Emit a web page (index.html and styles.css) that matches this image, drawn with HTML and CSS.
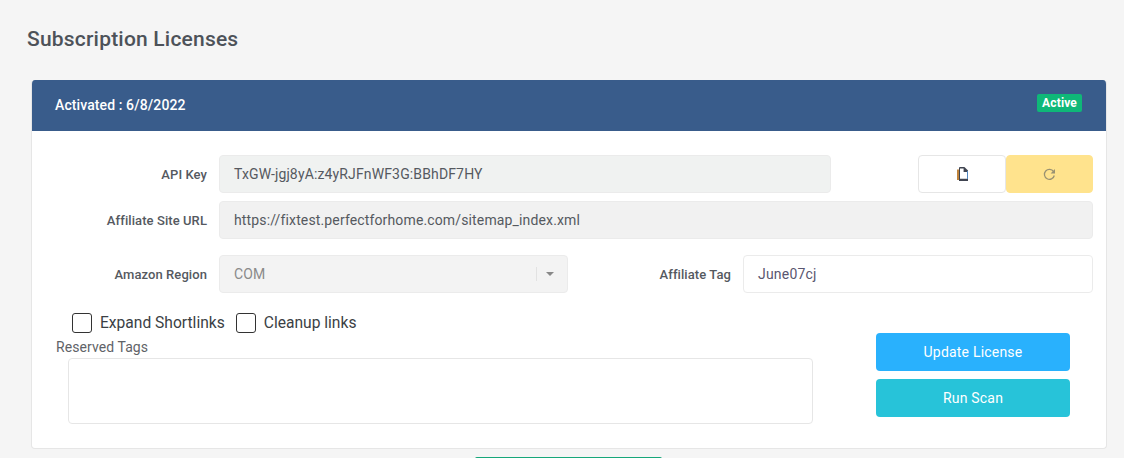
FILE: index.html
```html
<!DOCTYPE html>
<html lang="en">
<head>
<meta charset="utf-8">
<title>Subscription Licenses</title>
<link rel="stylesheet" href="styles.css">
</head>
<body>
<h1 class="page-title">Subscription Licenses</h1>
<section class="card">
  <header class="card-head">
    <span class="activated">Activated : 6/8/2022</span>
    <span class="badge">Active</span>
  </header>
  <div class="card-body">
    <div class="row row-key">
      <label class="label">API Key</label>
      <div class="field field-key">TxGW-jgj8yA:z4yRJFnWF3G:BBhDF7HY</div>
      <div class="btn-group">
        <button class="icon-btn copy" type="button" aria-label="Copy">
          <svg width="11" height="14" viewBox="0 0 11 14"><path d="M2 1q0-1 1-1h4.4L11 3.6V14H2z" fill="#3f4450"/><path d="M1 2.5V13" stroke="#c0843c" stroke-width="2" fill="none"/><path d="M10.5 4v8" stroke="#4f86c0" stroke-width="1" fill="none"/><path d="M3 1.4h3.6V5H10v6.8H3z" fill="#fff"/></svg>
        </button>
        <button class="icon-btn refresh" type="button" aria-label="Refresh">
          <svg width="13" height="13" viewBox="0 0 13 13"><path d="M10.6 3.6A5 5 0 1 0 11.3 7.5" fill="none" stroke="#9a9272" stroke-width="1.3"/><path d="M12 1v4.4H7.6z" fill="#9a9272"/></svg>
        </button>
      </div>
    </div>
    <div class="row row-url">
      <label class="label">Affiliate Site URL</label>
      <div class="field field-grow">https://fixtest.perfectforhome.com/sitemap_index.xml</div>
    </div>
    <div class="row row-region">
      <label class="label">Amazon Region</label>
      <div class="field field-select">
        <span class="select-value">COM</span>
        <span class="select-sep"></span>
        <span class="caret"></span>
      </div>
      <label class="label label-tag">Affiliate Tag</label>
      <div class="field field-tag">June07cj</div>
    </div>
    <div class="bottom">
      <div class="bottom-left">
        <div class="checks">
          <label class="check"><span class="box"></span>Expand Shortlinks</label>
          <label class="check"><span class="box"></span>Cleanup links</label>
        </div>
        <div class="reserved-label">Reserved Tags</div>
        <div class="textarea"></div>
      </div>
      <div class="actions">
        <button class="action update" type="button">Update License</button>
        <button class="action scan" type="button">Run Scan</button>
      </div>
    </div>
  </div>
</section>
<div class="next-bar"></div>
</body>
</html>
```
FILE: styles.css
```css
* { box-sizing: border-box; }
html, body { margin: 0; height: 458px; overflow: hidden; }
body {
  background: #f5f5f5;
  font-family: Roboto, "Liberation Sans", sans-serif;
  color: #4d5259;
  padding: 26px 17px 0 31px;
}
.page-title {
  margin: 0 0 28px -4px;
  font-size: 21px;
  line-height: 26px;
  font-weight: 500;
  letter-spacing: .2px;
  color: #4d5259;
}
.card {
  background: #fff;
  border: 1px solid #e6e6e6;
  border-top: 0;
  border-radius: 4px;
  height: 369px;
  overflow: hidden;
}
.card-head {
  background: #395c8b;
  height: 51px;
  display: flex;
  justify-content: space-between;
  padding: 15px 24px 0 23px;
  color: #fff;
}
.activated { font-size: 14px; line-height: 20px; font-weight: 500; letter-spacing: .1px; }
.badge {
  background: #0fb878;
  font-size: 12px;
  font-weight: 700;
  line-height: 18px;
  height: 18px;
  margin-top: -1px;
  padding: 0 5px;
  letter-spacing: .15px;
  border-radius: 2px;
}
.card-body { padding: 24px 13px 0 0; }
.row { display: flex; align-items: center; height: 38px; }
.row-url { margin-top: 8px; }
.row-region { margin-top: 16px; }
.label {
  width: 175px;
  text-align: right;
  font-size: 13px;
  font-weight: 500;
  letter-spacing: .08px;
  color: #55595f;
  flex: none;
}
.field {
  height: 38px;
  margin-left: 12px;
  padding: 0 14px;
  background: #f1f1f1;
  border: 1px solid #ebebeb;
  border-radius: 4px;
  font-size: 14px;
  line-height: 36px;
  letter-spacing: .14px;
  color: #55595f;
}
.field-key { width: 612px; background: #f0f2f1; flex: none; }
.field-grow { flex: 1; }
.field-select {
  width: 349px;
  flex: none;
  display: flex;
  align-items: center;
  background: #f3f3f3;
  color: #8a8a8a;
}
.select-value { flex: 1; }
.select-sep { width: 1px; height: 14px; background: #e2e2e2; margin-right: 9px; }
.caret {
  width: 0; height: 0;
  border-left: 4px solid transparent;
  border-right: 4px solid transparent;
  border-top: 4px solid #888;
  margin-right: -1px;
}
.label-tag { width: 163px; }
.field-tag { flex: 1; background: #fff; color: #5a5670; letter-spacing: .2px; }
.btn-group { display: flex; margin-left: 87px; }
.icon-btn {
  width: 88px;
  height: 38px;
  padding: 0;
  display: flex;
  align-items: center;
  justify-content: center;
  border-radius: 4px;
  border: 1px solid #e6e6e6;
  background: #fff;
}
.icon-btn.refresh {
  width: 87px;
  background: #ffe38d;
  border-color: #ffe38d;
}
.bottom { display: flex; height: 135px; margin-top: 20px; }
.bottom-left { width: 781px; flex: none; padding-left: 24px; }
.checks { display: flex; gap: 11px; padding-left: 16px; }
.check {
  display: flex;
  align-items: center;
  font-size: 15.6px;
  line-height: 20px;
  color: #3b3f45;
}
.box {
  width: 20px;
  height: 20px;
  margin-right: 8px;
  border: 1px solid #333;
  border-radius: 3px;
  background: #fff;
}
.reserved-label { font-size: 14px; line-height: 18px; margin-top: 5px; letter-spacing: .08px; color: #5f6368; }
.textarea {
  margin: 2px 0 0 12px;
  width: 745px;
  height: 66px;
  border: 1px solid #e6e6e6;
  border-radius: 4px;
  background: #fff;
}
.actions { display: flex; flex-direction: column; gap: 8px; margin-left: 63px; padding-top: 20px; }
.action {
  width: 194px;
  height: 38px;
  border: 0;
  border-radius: 4px;
  color: #fff;
  font: 400 14px Roboto, "Liberation Sans", sans-serif;
  letter-spacing: .2px;
}
.update { background: #29b1fd; }
.scan { background: #27c3d9; }
.next-bar {
  width: 187px;
  height: 3px;
  margin: 8px 0 0 444px;
  background: #17a77a;
  border-radius: 2px 2px 0 0;
}
```
